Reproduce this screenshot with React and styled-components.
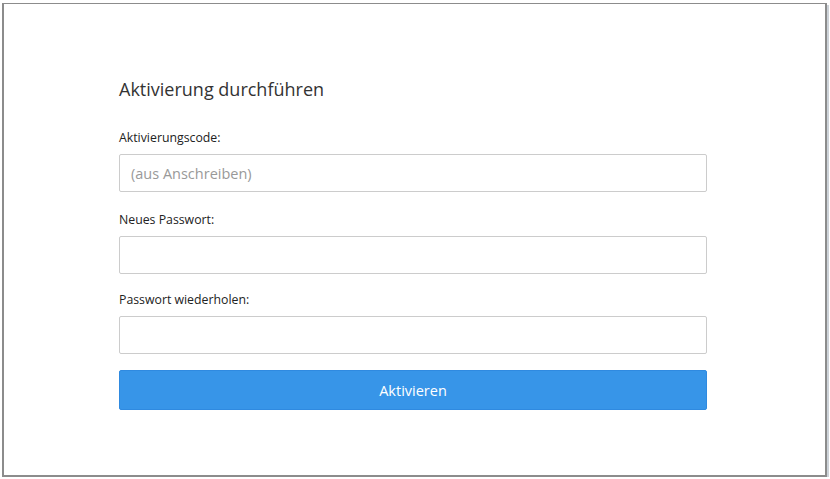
import styled, { createGlobalStyle } from "styled-components";

const GlobalStyle = createGlobalStyle`
  html, body {
    margin: 0;
    padding: 0;
    background: #ffffff;
  }
  body {
    font-family: "Open Sans", "Noto Sans", sans-serif;
    color: #333333;
  }
`;

const Frame = styled.div`
  box-sizing: border-box;
  margin: 3px 3px 0 2px;
  height: 474px;
  border: 1px solid #8c8c8c;
  border-width: 1px 2px 2px 2px;
  box-shadow: 2px 2px 0 #cdd3d9;
  background: #ffffff;
  padding: 71px 0 0 115px;
`;

const Form = styled.form`
  width: 588px;
  display: flex;
  flex-direction: column;
`;

const Title = styled.h2`
  margin: 0 0 27px;
  font-size: 18px;
  font-weight: 400;
  line-height: 28px;
  color: #333333;
`;

const Label = styled.label`
  display: block;
  font-size: 12.3px;
  line-height: 16px;
  color: #222222;
  margin-bottom: 8px;
`;

const Field = styled.div`
  display: flex;
  flex-direction: column;
  margin-bottom: ${(p) => p.$gap}px;
`;

const Input = styled.input`
  box-sizing: border-box;
  width: 100%;
  height: 38px;
  border: 1px solid #cccccc;
  border-radius: 2px;
  padding: 0 11px;
  font-family: inherit;
  font-size: 14.5px;
  color: #333333;
  background: #ffffff;
  outline: none;

  &::placeholder {
    color: #999999;
  }
`;

const Button = styled.button`
  box-sizing: border-box;
  width: 100%;
  height: 40px;
  border: 1px solid #2f8ae0;
  border-radius: 2px;
  background: #3795e8;
  color: #ffffff;
  font-family: inherit;
  font-size: 14.5px;
  cursor: pointer;
`;

export default function App() {
  return (
    <>
      <GlobalStyle />
      <Frame>
        <Form onSubmit={(e) => e.preventDefault()}>
          <Title>Aktivierung durchführen</Title>
          <Field $gap={20}>
            <Label>Aktivierungscode:</Label>
            <Input placeholder="(aus Anschreiben)" />
          </Field>
          <Field $gap={18}>
            <Label>Neues Passwort:</Label>
            <Input type="password" />
          </Field>
          <Field $gap={16}>
            <Label>Passwort wiederholen:</Label>
            <Input type="password" />
          </Field>
          <Button type="submit">Aktivieren</Button>
        </Form>
      </Frame>
    </>
  );
}
